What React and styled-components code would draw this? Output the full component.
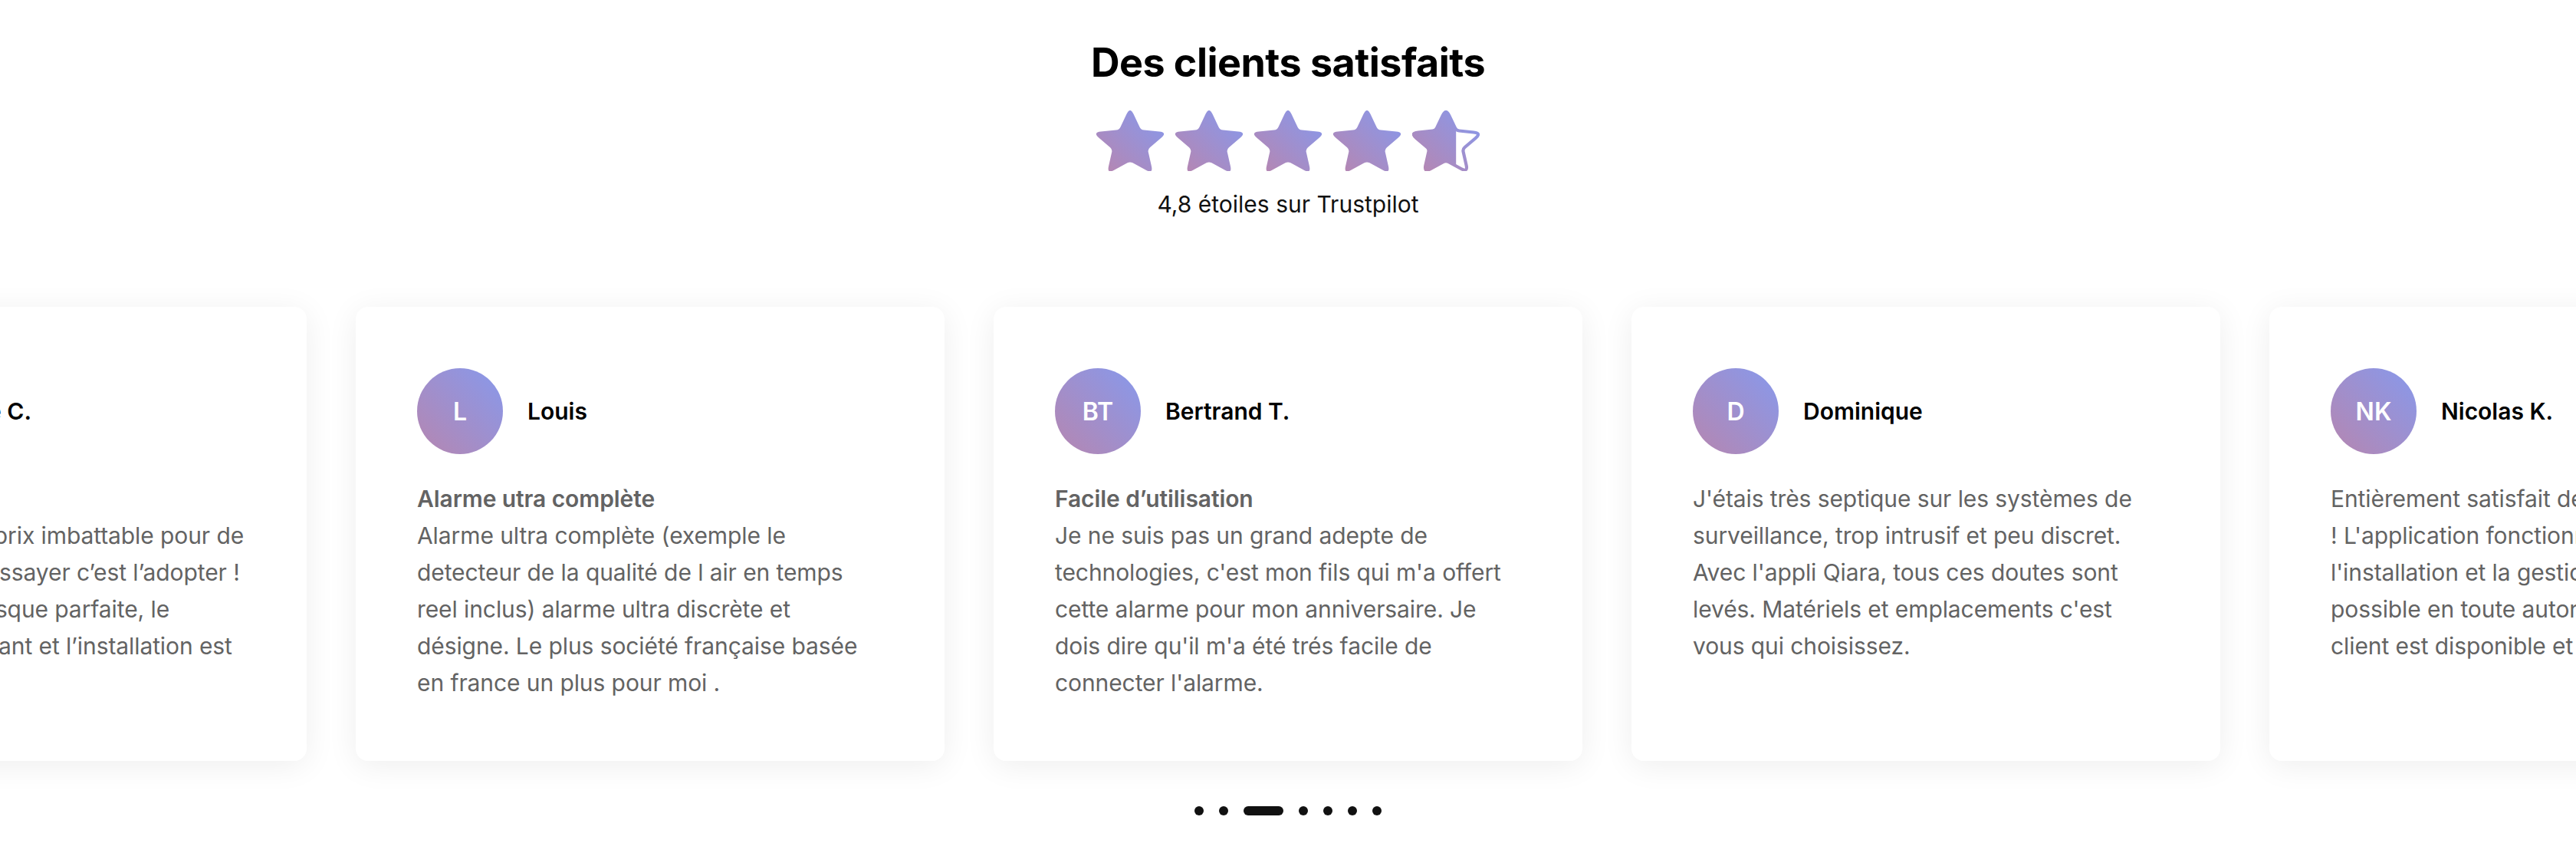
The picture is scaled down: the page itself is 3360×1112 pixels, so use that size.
import React from 'react';
import styled, { createGlobalStyle } from 'styled-components';

const GlobalStyle = createGlobalStyle`
  * { box-sizing: border-box; }
  body {
    margin: 0;
    background: #fff;
    font-family: Inter, "Noto Sans", sans-serif;
    -webkit-font-smoothing: antialiased;
  }
`;

const Section = styled.section`
  padding-top: 52px;
  text-align: center;
`;

const Title = styled.h2`
  margin: 0;
  font-size: 52px;
  line-height: 60px;
  font-weight: 700;
  color: #000;
  letter-spacing: -0.01em;
`;

const Stars = styled.div`
  display: flex;
  justify-content: center;
  gap: 15px;
  margin-top: 32px;
`;

const Rating = styled.p`
  margin: 25px 0 0;
  font-size: 30px;
  line-height: 36px;
  color: #111;
`;

const Viewport = styled.div`
  margin-top: 76px;
  padding: 40px 0;
  overflow: hidden;
`;

const Track = styled.div`
  display: flex;
  justify-content: center;
  gap: 64px;
`;

const Card = styled.article`
  flex: 0 0 768px;
  padding: 80px 80px 78px;
  background: #fff;
  border-radius: 16px;
  box-shadow: 0 6px 40px rgba(0, 0, 0, 0.07);
  text-align: left;
`;

const Header = styled.div`
  display: flex;
  align-items: center;
  gap: 32px;
`;

const Avatar = styled.div`
  width: 112px;
  height: 112px;
  flex-shrink: 0;
  border-radius: 50%;
  background: linear-gradient(to top right, #b686b0, #8799ec);
  display: flex;
  align-items: center;
  justify-content: center;
  color: #fff;
  font-size: 32px;
  font-weight: 600;
`;

const Name = styled.span`
  font-size: 30px;
  font-weight: 600;
  color: #000;
`;

const Review = styled.div`
  margin-top: 34px;
  font-size: 30px;
  line-height: 48px;
  color: #636363;
  letter-spacing: -0.003em;
  white-space: pre-line;
`;

const Headline = styled.strong`
  display: block;
  font-weight: 600;
`;

const Dots = styled.div`
  display: flex;
  justify-content: center;
  align-items: center;
  gap: 20px;
  margin-top: 19px;
`;

const Dot = styled.span`
  width: ${p => (p.$active ? 52 : 12)}px;
  height: 12px;
  border-radius: 6px;
  background: #111;
`;

// rounded five point star, built once
const buildStar = () => {
  const R = 52;
  const r = R * 0.47;
  const pts = [];
  for (let i = 0; i < 10; i++) {
    const rad = i % 2 === 0 ? R : r;
    const a = ((-90 + i * 36) * Math.PI) / 180;
    pts.push([rad * Math.cos(a), rad * Math.sin(a)]);
  }
  const toward = (a, b, dist) => {
    const dx = b[0] - a[0];
    const dy = b[1] - a[1];
    const len = Math.hypot(dx, dy);
    return [a[0] + (dx / len) * dist, a[1] + (dy / len) * dist];
  };
  const f = p => `${p[0].toFixed(2)} ${p[1].toFixed(2)}`;
  let d = '';
  pts.forEach((p, i) => {
    const t = i % 2 === 0 ? 11 : 4;
    const p1 = toward(p, pts[(i + 9) % 10], t);
    const p2 = toward(p, pts[(i + 1) % 10], t);
    d += `${i === 0 ? 'M' : 'L'}${f(p1)} Q${f(p)} ${f(p2)} `;
  });
  return d + 'Z';
};

const STAR = buildStar();
const BOX = { x: -44.5, y: -46.8, w: 89, h: 84.7 };

const Star = ({ id, fill = 1 }) => (
  <svg
    width="88"
    height="79"
    viewBox={`${BOX.x} ${BOX.y} ${BOX.w} ${BOX.h}`}
    preserveAspectRatio="none"
  >
    <defs>
      <linearGradient id={`g${id}`} x1="0" y1="1" x2="1" y2="0">
        <stop offset="0" stopColor="#b985ae" />
        <stop offset="1" stopColor="#8599ee" />
      </linearGradient>
      <clipPath id={`c${id}`}>
        <rect x={BOX.x} y={BOX.y} width={BOX.w * fill} height={BOX.h} />
      </clipPath>
    </defs>
    {fill < 1 && (
      <path
        d={STAR}
        fill="none"
        stroke={`url(#g${id})`}
        strokeWidth="4.5"
        strokeLinejoin="round"
        transform="scale(0.95)"
      />
    )}
    <path d={STAR} fill={`url(#g${id})`} clipPath={`url(#c${id})`} />
  </svg>
);

const reviews = [
  {
    initials: 'SC',
    name: 'Stéphanie C.',
    title: 'Top qualité',
    text:
      'Bonne qualité et un prix imbattable pour de\nce super produit. L’essayer c’est l’adopter !\nL’application est presque parfaite, le\nmatériel est performant et l’installation est\nsimple.',
  },
  {
    initials: 'L',
    name: 'Louis',
    title: 'Alarme utra complète',
    text:
      'Alarme ultra complète (exemple le\ndetecteur de la qualité de l air en temps\nreel inclus) alarme ultra discrète et\ndésigne. Le plus société française basée\nen france un plus pour moi .',
  },
  {
    initials: 'BT',
    name: 'Bertrand T.',
    title: 'Facile d’utilisation',
    text:
      "Je ne suis pas un grand adepte de\ntechnologies, c'est mon fils qui m'a offert\ncette alarme pour mon anniversaire. Je\ndois dire qu'il m'a été trés facile de\nconnecter l'alarme.",
  },
  {
    initials: 'D',
    name: 'Dominique',
    text:
      "J'étais très septique sur les systèmes de\nsurveillance, trop intrusif et peu discret.\nAvec l'appli Qiara, tous ces doutes sont\nlevés. Matériels et emplacements c'est\nvous qui choisissez.",
  },
  {
    initials: 'NK',
    name: 'Nicolas K.',
    text:
      "Entièrement satisfait de cette alarme\n! L'application fonctionne parfaitement et\nl'installation et la gestion se font le plus\npossible en toute autonomie. Le service\nclient est disponible et à l'écoute.",
  },
];

const App = () => (
  <Section>
    <GlobalStyle />
    <Title>Des clients satisfaits</Title>
    <Stars>
      {[1, 1, 1, 1, 0.65].map((f, i) => (
        <Star key={i} id={i} fill={f} />
      ))}
    </Stars>
    <Rating>4,8 étoiles sur Trustpilot</Rating>
    <Viewport>
      <Track>
        {reviews.map(r => (
          <Card key={r.name}>
            <Header>
              <Avatar>{r.initials}</Avatar>
              <Name>{r.name}</Name>
            </Header>
            <Review>
              {r.title && <Headline>{r.title}</Headline>}
              {r.text}
            </Review>
          </Card>
        ))}
      </Track>
    </Viewport>
    <Dots>
      {[0, 1, 2, 3, 4, 5, 6].map(i => (
        <Dot key={i} $active={i === 2} />
      ))}
    </Dots>
  </Section>
);

export default App;
